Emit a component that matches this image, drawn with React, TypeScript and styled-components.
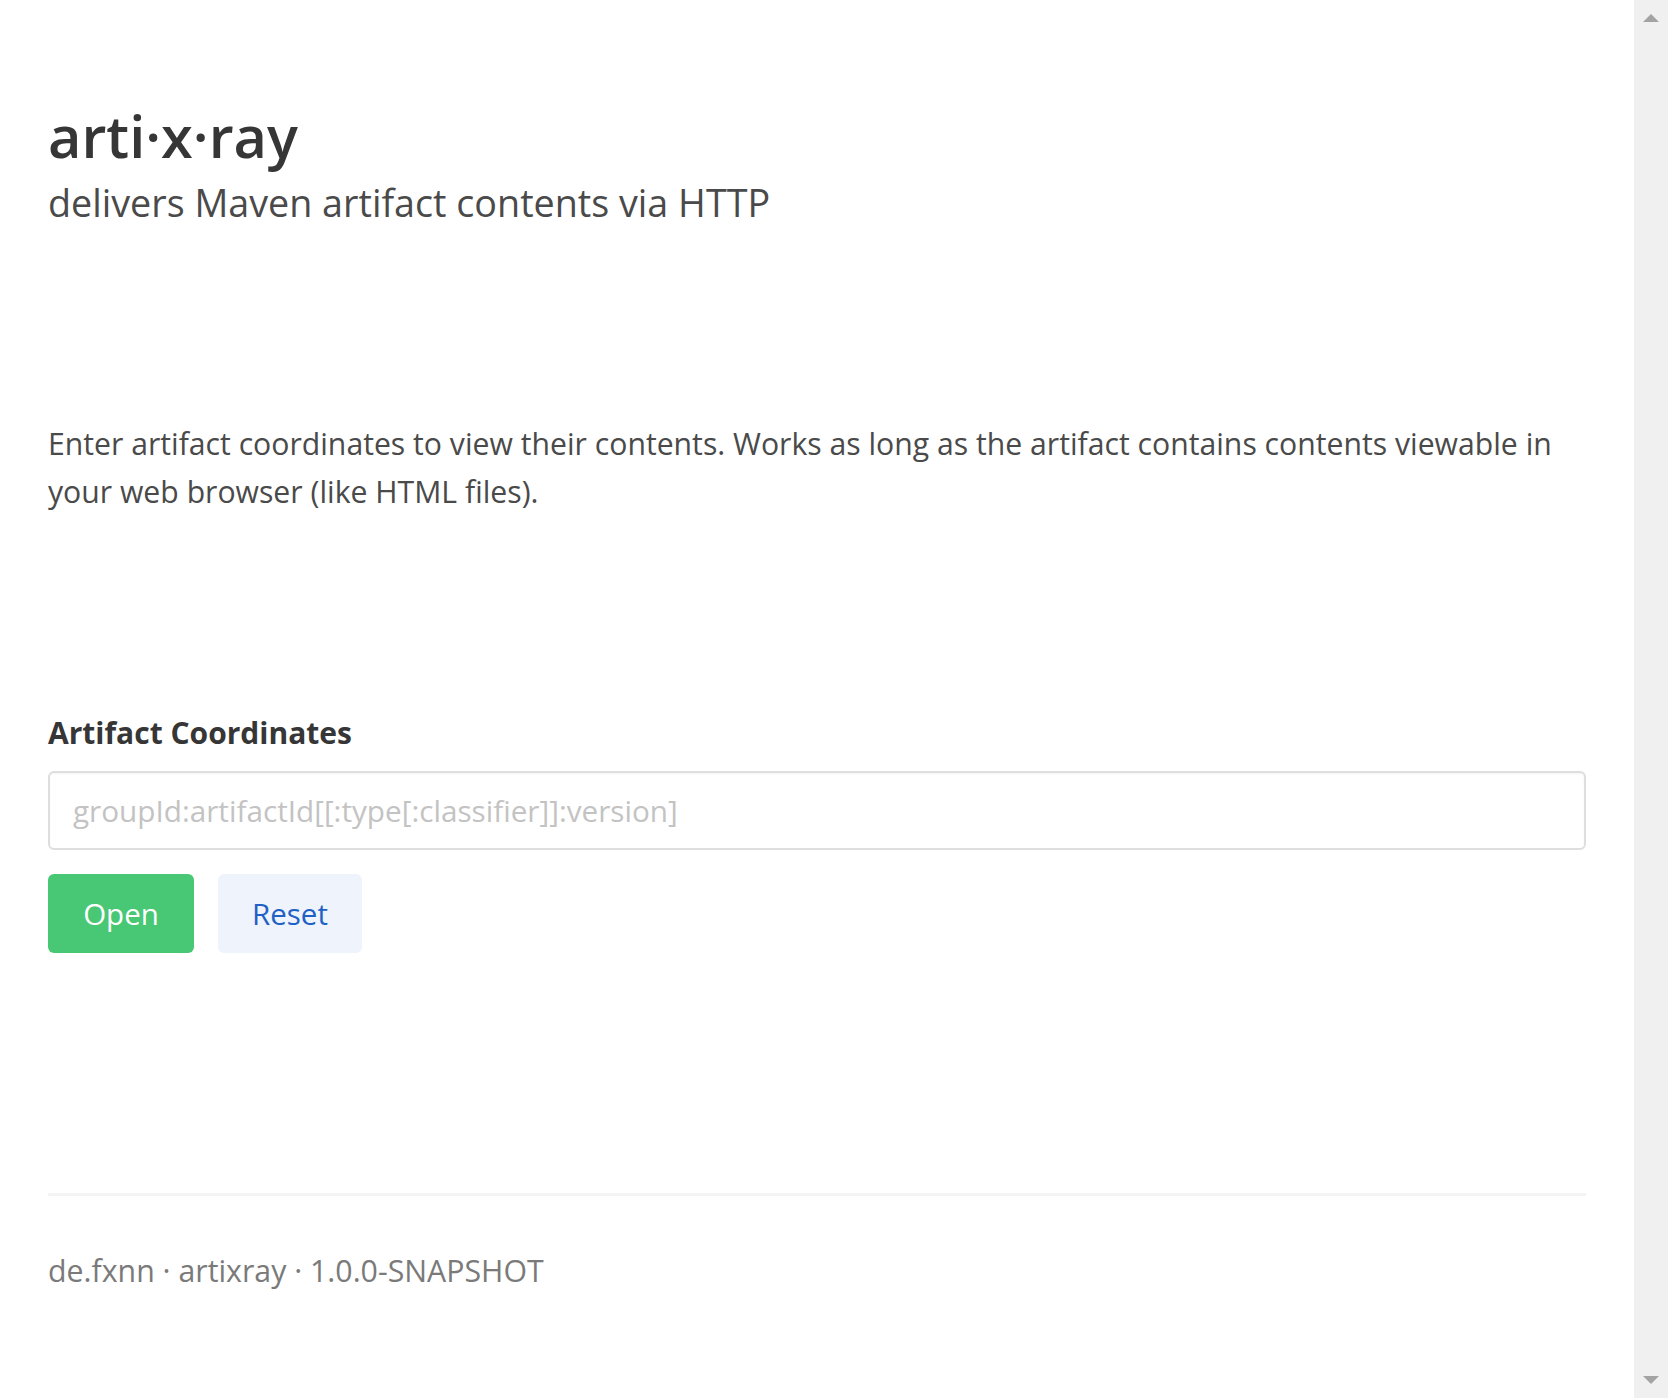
import React from "react";
import styled, { createGlobalStyle } from "styled-components";

const GlobalStyle = createGlobalStyle`
  html, body { margin: 0; padding: 0; background: #ffffff; }
  body {
    font-family: "Open Sans", "Noto Sans", sans-serif;
    color: #4a4a4a;
    overflow: hidden;
  }
  * { box-sizing: border-box; }
`;

const Shell = styled.div`
  display: flex;
  align-items: flex-start;
  width: 100%;
`;

const Main = styled.main`
  flex: 1;
  min-width: 0;
  padding: 102px 48px 0;
`;

const Title = styled.h1`
  margin: 0;
  font-size: 57.7px;
  line-height: 68px;
  font-weight: 600;
  color: #363636;
`;

const Subtitle = styled.h2`
  margin: 11px 0 0;
  font-size: 37.7px;
  line-height: 44px;
  font-weight: 400;
  color: #4a4a4a;
`;

const Lead = styled.p`
  margin: 195px 0 0;
  font-size: 30.2px;
  line-height: 48px;
  color: #4a4a4a;
`;

const Form = styled.form`
  margin-top: 197px;
  display: flex;
  flex-direction: column;
`;

const Label = styled.label`
  font-size: 30px;
  line-height: 40px;
  font-weight: 700;
  color: #363636;
`;

const Input = styled.input`
  margin-top: 18px;
  height: 79px;
  width: 100%;
  padding: 0 23px;
  border: 2px solid #dedede;
  border-radius: 6px;
  box-shadow: inset 0 1px 2px rgba(10, 10, 10, 0.05);
  font-family: inherit;
  font-size: 29.7px;
  color: #363636;
  outline: none;
  &::placeholder { color: #c3c3c3; }
`;

const Buttons = styled.div`
  margin-top: 24px;
  display: flex;
  gap: 24px;
`;

const Button = styled.button<{ $variant: "success" | "link" }>`
  height: 79px;
  width: ${(p) => (p.$variant === "success" ? "146px" : "144px")};
  border: none;
  border-radius: 6px;
  font-family: inherit;
  font-size: 29.5px;
  background: ${(p) => (p.$variant === "success" ? "#48c774" : "#eef3fc")};
  color: ${(p) => (p.$variant === "success" ? "#ffffff" : "#2160c4")};
  cursor: pointer;
`;

const Rule = styled.hr`
  margin: 240px 0 0;
  border: none;
  height: 3px;
  background: #f4f4f4;
`;

const Footer = styled.footer`
  margin-top: 55px;
  font-size: 30.3px;
  line-height: 40px;
  color: #7a7a7a;
`;

const FooterNote = styled.p`
  margin: 99px 0 0;
  font-size: 30px;
  line-height: 40px;
  color: #7a7a7a;
`;

const ScrollTrack = styled.div`
  position: sticky;
  top: 0;
  width: 34px;
  height: 100vh;
  flex: none;
  background: #f0f0f0;
  display: flex;
  flex-direction: column;
  justify-content: space-between;
  align-items: center;
  padding: 14px 0 14px;
`;

const Arrow = styled.div<{ $dir: "up" | "down" }>`
  width: 0;
  height: 0;
  border-left: 8px solid transparent;
  border-right: 8px solid transparent;
  ${(p) =>
    p.$dir === "up"
      ? "border-bottom: 8px solid #a3a3a3;"
      : "border-top: 8px solid #a3a3a3;"}
`;

export default function App() {
  return (
    <>
      <GlobalStyle />
      <Shell>
        <Main>
          <Title>arti·x·ray</Title>
          <Subtitle>delivers Maven artifact contents via HTTP</Subtitle>
          <Lead>
            Enter artifact coordinates to view their contents. Works as long as the artifact contains
            contents viewable in your web browser (like HTML files).
          </Lead>
          <Form onSubmit={(e) => e.preventDefault()}>
            <Label htmlFor="coords">Artifact Coordinates</Label>
            <Input id="coords" placeholder="groupId:artifactId[[:type[:classifier]]:version]" />
            <Buttons>
              <Button type="submit" $variant="success">Open</Button>
              <Button type="reset" $variant="link">Reset</Button>
            </Buttons>
          </Form>
          <Rule />
          <Footer>de.fxnn · artixray · 1.0.0-SNAPSHOT</Footer>
          <FooterNote>Source code and documentation are available on GitHub.</FooterNote>
        </Main>
        <ScrollTrack>
          <Arrow $dir="up" />
          <Arrow $dir="down" />
        </ScrollTrack>
      </Shell>
    </>
  );
}
